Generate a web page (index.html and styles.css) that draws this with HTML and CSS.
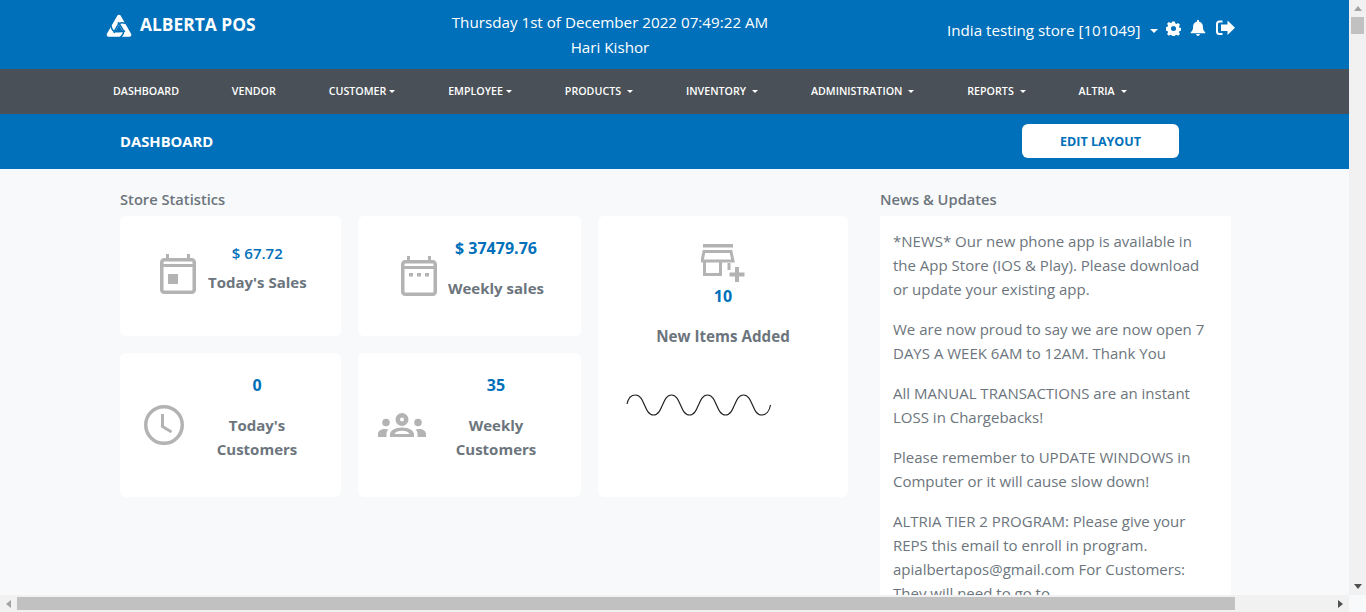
FILE: index.html
```html
<!DOCTYPE html>
<html lang="en">
<head>
<meta charset="utf-8">
<title>Alberta POS - Dashboard</title>
<link rel="stylesheet" href="styles.css">
</head>
<body>
  <div class="page">
    <header class="topbar">
      <div class="brand">
        <svg class="brand-logo" viewBox="0 0 26 26">
          <path d="M13 3.800L23.300 21.800H2.700z" fill="#fff" stroke="#fff" stroke-width="4" stroke-linejoin="round"/>
          <path d="M13 11.800L16.600 18.200H9.400z" fill="#0070ba"/>
          <path id="slit" d="M19.800 10.500C16.500 9.200 13.500 9.500 12 11.800C10 14.800 9 16.500 8 20" fill="none" stroke="#0070ba" stroke-width="1.500"/>
          <use href="#slit" transform="rotate(120 13 15.800)"/>
          <use href="#slit" transform="rotate(240 13 15.800)"/>
        </svg>
        <span class="brand-name">ALBERTA POS</span>
      </div>
      <div class="clock-block">
        <div>Thursday 1st of December 2022 07:49:22 AM</div>
        <div>Hari Kishor</div>
      </div>
      <div class="store-block">
        <span class="store-name">India testing store [101049]</span>
        <span class="caret caret-store"></span>
        <svg class="top-icon icon-gear" viewBox="0 0 16 16">
          <path fill-rule="evenodd" d="M6.600 0.500h2.800l.4 2 1.300.6 1.800-1.100 2 2-1.100 1.800.6 1.300 2 .4v2.800l-2 .4-.6 1.300 1.100 1.800-2 2-1.800-1.100-1.300.6-.4 2H6.600l-.4-2-1.300-.6-1.800 1.100-2-2 1.100-1.800-.6-1.300-2-.4V6.500l2-.4.6-1.300L1.100 3l2-2 1.800 1.100 1.300-.6zM8 5.300a2.700 2.700 0 1 0 0 5.400 2.700 2.700 0 0 0 0-5.400z" fill="#fff"/>
        </svg>
        <svg class="top-icon icon-bell" viewBox="0 0 16 17">
          <path d="M8 0c-.7 0-1.200.5-1.200 1.200v.6C4.300 2.300 2.800 4.300 2.800 6.800c0 3.700-1.100 4.900-2.400 6.100-.5.500-.2 1.300.5 1.300h14.200c.7 0 1-.8.5-1.300-1.300-1.200-2.400-2.400-2.400-6.100 0-2.500-1.500-4.500-4-5v-.6C9.200.5 8.700 0 8 0zM6 15c0 1.100.9 2 2 2s2-.9 2-2z" fill="#fff"/>
        </svg>
        <svg class="top-icon icon-exit" viewBox="0 0 19 16">
          <path d="M6.500 1.500H3.500C2 1.500 1 2.500 1 4v7.500C1 13 2 14 3.500 14h3" fill="none" stroke="#fff" stroke-width="2"/>
          <path d="M11.500 0.500L19 7.800l-7.500 7.300v-4H5V4.500h6.500z" fill="#fff"/>
        </svg>
      </div>
    </header>

    <nav class="mainnav">
      <a class="nav-link">DASHBOARD</a>
      <a class="nav-link">VENDOR</a>
      <a class="nav-link">CUSTOMER<span class="caret caret-tight"></span></a>
      <a class="nav-link">EMPLOYEE<span class="caret caret-tight"></span></a>
      <a class="nav-link">PRODUCTS<span class="caret"></span></a>
      <a class="nav-link">INVENTORY<span class="caret"></span></a>
      <a class="nav-link">ADMINISTRATION<span class="caret"></span></a>
      <a class="nav-link">REPORTS<span class="caret"></span></a>
      <a class="nav-link">ALTRIA<span class="caret"></span></a>
    </nav>

    <div class="titlebar">
      <h1 class="page-title">DASHBOARD</h1>
      <button class="edit-btn">EDIT LAYOUT</button>
    </div>

    <main class="content">
      <section class="stats">
        <h2 class="section-title">Store Statistics</h2>
        <div class="stat-grid">
          <div class="card stat stat-sales">
            <svg class="stat-icon" width="36" height="40" viewBox="0 0 36 40">
              <path d="M7.500 0v5M28.500 0v5" stroke="#b3b3b3" stroke-width="3"/>
              <rect x="1.750" y="5.750" width="32.500" height="32.500" rx="2.500" fill="none" stroke="#b3b3b3" stroke-width="3.500"/>
              <path d="M2 11.500h32" stroke="#b3b3b3" stroke-width="3"/>
              <rect x="8" y="20" width="10" height="10" fill="#b3b3b3"/>
            </svg>
            <div class="stat-text">
              <div class="stat-value value-light">$ 67.72</div>
              <div class="stat-label label-near">Today's Sales</div>
            </div>
          </div>

          <div class="card stat stat-weekly">
            <svg class="stat-icon" width="36" height="40" viewBox="0 0 36 40">
              <path d="M7.500 0v5M28.500 0v5" stroke="#b3b3b3" stroke-width="3"/>
              <rect x="1.750" y="5.750" width="32.500" height="32.500" rx="2.500" fill="none" stroke="#b3b3b3" stroke-width="3.500"/>
              <path d="M2 11.500h32" stroke="#b3b3b3" stroke-width="3"/>
              <path d="M8 17h4v3.500H8zM16 17h4v3.500h-4zM24 17h4v3.500h-4z" fill="#b3b3b3"/>
            </svg>
            <div class="stat-text">
              <div class="stat-value">$ 37479.76</div>
              <div class="stat-label">Weekly sales</div>
            </div>
          </div>

          <div class="card items">
            <svg class="items-icon" width="44" height="38" viewBox="0 0 44 38">
              <path d="M2 0h30v3.500H2z" fill="#b3b3b3"/>
              <path d="M3 7.500h27l2 9.500H1z" fill="none" stroke="#b3b3b3" stroke-width="3"/>
              <path d="M3.500 17v13.500h16V17M19.500 19v10" fill="none" stroke="#b3b3b3" stroke-width="3"/>
              <path d="M28 19v7" stroke="#b3b3b3" stroke-width="3"/>
              <path d="M36 23v15M28.500 30.500h15" stroke="#b3b3b3" stroke-width="4"/>
            </svg>
            <div class="stat-value">10</div>
            <div class="stat-label">New Items Added</div>
            <svg class="sparkline" width="146" height="22" viewBox="0 0 146 22">
              <path d="M1 10C2 5 5 1 9.500 1C19 1 18 21 27.500 21C37 21 36 1 45.500 1C55 1 54 21 63.500 21C73 21 72 1 81.500 1C91 1 90 21 99.500 21C109 21 108 1 117.500 1C127 1 126 21 135.500 21C140 21 143.500 17 144.500 11" fill="none" stroke="#222" stroke-width="1.200"/>
            </svg>
          </div>

          <div class="card stat stat-customers">
            <svg class="stat-icon" width="40" height="40" viewBox="0 0 40 40">
              <circle cx="20" cy="20" r="18.250" fill="none" stroke="#b3b3b3" stroke-width="3.500"/>
              <path d="M18.500 9v12.500l9 5.500" fill="none" stroke="#b3b3b3" stroke-width="3"/>
            </svg>
            <div class="stat-text">
              <div class="stat-value">0</div>
              <div class="stat-label">Today's Customers</div>
            </div>
          </div>

          <div class="card stat stat-people">
            <svg class="stat-icon" width="48" height="24" viewBox="0 0 48 24">
              <path fill-rule="evenodd" d="M24 0a6.500 6.500 0 1 1 0 13 6.500 6.500 0 0 1 0-13zm0 4.500a2 2 0 1 0 0 4 2 2 0 0 0 0-4z" fill="#b3b3b3"/>
              <circle cx="8" cy="9.500" r="3.800" fill="#b3b3b3"/>
              <circle cx="40" cy="9.500" r="3.800" fill="#b3b3b3"/>
              <path d="M0 24v-3c0-3 3-5 7-5 1.500 0 2.500.2 3.500.6C9 18 8.500 19.500 8.500 21v3zM48 24v-3c0-3-3-5-7-5-1.500 0-2.500.2-3.500.6 1.500 1.400 2 2.900 2 4.400v3z" fill="#b3b3b3"/>
              <path fill-rule="evenodd" d="M12 24v-2.500c0-4 5-7 12-7s12 3 12 7V24zm4.500-3h15c-1-2-3.900-3.200-7.500-3.200s-6.500 1.200-7.500 3.200z" fill="#b3b3b3"/>
            </svg>
            <div class="stat-text">
              <div class="stat-value">35</div>
              <div class="stat-label">Weekly Customers</div>
            </div>
          </div>
        </div>
      </section>

      <section class="news">
        <h2 class="section-title">News &amp; Updates</h2>
        <div class="card news-body">
          <p>*NEWS* Our new phone app is available in the App Store (IOS &amp; Play). Please download or update your existing app.</p>
          <p>We are now proud to say we are now open 7 DAYS A WEEK 6AM to 12AM. Thank You</p>
          <p>All MANUAL TRANSACTIONS are an instant LOSS in Chargebacks!</p>
          <p>Please remember to UPDATE WINDOWS in Computer or it will cause slow down!</p>
          <p>ALTRIA TIER 2 PROGRAM: Please give your REPS this email to enroll in program. apialbertapos@gmail.com For Customers: They will need to go to</p>
        </div>
      </section>
    </main>
  </div>

  <div class="scroll-v">
    <span class="arrow arrow-up"></span>
    <span class="thumb-v"></span>
    <span class="arrow arrow-down"></span>
  </div>
  <div class="scroll-h">
    <span class="arrow arrow-left"></span>
    <span class="thumb-h"></span>
    <span class="arrow arrow-right"></span>
  </div>
  <div class="scroll-corner"></div>
</body>
</html>
```

FILE: styles.css
```css
* {
  box-sizing: border-box;
}
html, body {
  height: 100%;
  margin: 0;
}
body {
  display: grid;
  grid-template-columns: 1349px 17px;
  grid-template-rows: 595px 17px;
  overflow: hidden;
  background: #f8f9fa;
  color: #6c757d;
  font-family: "Open Sans", "Noto Sans", sans-serif;
  font-size: 15px;
  line-height: 24px;
}
.page {
  overflow: hidden;
}

/* top blue bar */
.topbar {
  display: flex;
  height: 69px;
  background: #0070ba;
  color: #fff;
}
.brand {
  display: flex;
  align-items: flex-start;
  width: 451px;
  padding: 13px 0 0 106px;
}
.brand-logo {
  width: 26px;
  height: 26px;
  flex: none;
}
.brand-name {
  margin: -1px 0 0 8px;
  font-size: 17.400px;
  font-weight: 700;
  line-height: 24px;
}
.clock-block {
  width: 318px;
  padding-top: 10px;
  text-align: center;
  font-size: 15.200px;
  line-height: 25px;
  white-space: nowrap;
}
.store-block {
  display: flex;
  align-items: flex-start;
  padding: 18px 0 0 178px;
  font-size: 15.200px;
}
.store-name {
  white-space: nowrap;
}
.caret {
  display: inline-block;
  margin-left: 6px;
  border-top: 3.500px solid #fff;
  border-left: 3.500px solid transparent;
  border-right: 3.500px solid transparent;
  vertical-align: 2px;
}
.caret-tight {
  margin-left: 3px;
}
.caret-store {
  margin: 11px 0 0 9px;
  border-top-width: 4px;
  border-left-width: 4px;
  border-right-width: 4px;
}
.top-icon {
  flex: none;
  margin-top: 2px;
}
.icon-gear {
  width: 15px;
  height: 15px;
  margin-left: 8px;
  margin-top: 3px;
}
.icon-bell {
  width: 16px;
  height: 16px;
  margin-left: 9px;
}
.icon-exit {
  width: 19px;
  height: 16px;
  margin-left: 10px;
}

/* dark menu */
.mainnav {
  display: flex;
  align-items: center;
  gap: 52.800px;
  height: 45px;
  padding: 0 0 2px 113px;
  background: #495057;
  color: #fff;
  font-size: 10.700px;
  font-weight: 600;
}
.nav-link {
  white-space: nowrap;
}

/* page title */
.titlebar {
  display: flex;
  align-items: center;
  height: 55px;
  padding: 0 0 0 120px;
  background: #0070ba;
}
.page-title {
  width: 902px;
  margin: 0 0 2px;
  color: #fff;
  font-size: 14.800px;
  font-weight: 700;
}
.edit-btn {
  width: 157px;
  height: 34px;
  margin-bottom: 1px;
  padding: 0;
  border: 0;
  border-radius: 6px;
  background: #fff;
  color: #0070ba;
  font-family: inherit;
  font-size: 12.500px;
  font-weight: 700;
}

/* dashboard */
.content {
  display: flex;
  padding: 18px 0 0 120px;
}
.section-title {
  margin: 0 0 5px;
  font-size: 14.700px;
  font-weight: 600;
  line-height: 24px;
}
.stat-grid {
  display: grid;
  grid-template-columns: 221px 223px 250px;
  grid-template-rows: 120px 144px;
  gap: 17px;
}
.card {
  border-radius: 6px;
  background: #fff;
}
.stat {
  display: flex;
  align-items: flex-start;
}
.stat-text {
  text-align: center;
}
.stat-value {
  color: #0070ba;
  font-size: 16px;
  font-weight: 700;
}
.value-light {
  font-size: 15px;
  font-weight: 600;
}
.stat-label {
  margin-top: 16px;
  font-size: 15px;
  font-weight: 700;
}
.label-near {
  margin-top: 5px;
}
.stat-sales {
  padding: 25px 0 0 40px;
}
.stat-sales .stat-icon {
  margin: 13px 12px 0 0;
}
.stat-weekly {
  padding: 20px 0 0 43px;
}
.stat-weekly .stat-icon {
  margin: 20px 11px 0 0;
}
.stat-customers {
  padding: 20px 0 0 24px;
}
.stat-customers .stat-icon {
  margin: 32px 18px 0 0;
}
.stat-people {
  padding: 20px 0 0 20px;
}
.stat-people .stat-icon {
  margin: 40px 15px 0 0;
}
.stat-customers .stat-text,
.stat-people .stat-text {
  width: 110px;
}
.items {
  grid-row: 1 / span 2;
  grid-column: 3;
  display: flex;
  flex-direction: column;
  align-items: center;
  padding-top: 28px;
}
.items-icon {
  margin-bottom: 2px;
}
.items .stat-label {
  margin-top: 16px;
  font-size: 15.200px;
}
.sparkline {
  align-self: flex-start;
  margin: 46px 0 0 28px;
}
.news {
  width: 351px;
  margin-left: 32px;
}
.news-body {
  height: 400px;
  padding: 13px 16px 0 13px;
  border-radius: 0;
  font-size: 15px;
}
.news-body p {
  margin: 0 0 16px;
}

/* browser scrollbars, drawn because the shot shows them */
.scroll-v {
  display: flex;
  flex-direction: column;
  align-items: center;
  grid-row: 1 / span 2;
  grid-column: 2;
  height: 595px;
  background: #f1f1f1;
}
.thumb-v {
  width: 13px;
  height: 17px;
  margin-top: 6px;
  background: #c1c1c1;
}
.scroll-h {
  display: flex;
  align-items: center;
  background: #f1f1f1;
}
.thumb-h {
  width: 1218px;
  height: 13px;
  margin-left: 6px;
  background: #c1c1c1;
}
.scroll-corner {
  background: #dcdcdc;
}
.arrow {
  flex: none;
  width: 0;
  height: 0;
}
.arrow-up {
  margin-top: 6px;
  border-bottom: 5px solid #a3a3a3;
  border-left: 4px solid transparent;
  border-right: 4px solid transparent;
}
.arrow-down {
  margin-top: auto;
  margin-bottom: 6px;
  border-top: 5px solid #505050;
  border-left: 4px solid transparent;
  border-right: 4px solid transparent;
}
.arrow-left {
  margin-left: 6px;
  border-right: 5px solid #a3a3a3;
  border-top: 4px solid transparent;
  border-bottom: 4px solid transparent;
}
.arrow-right {
  margin-left: auto;
  margin-right: 6px;
  border-left: 5px solid #505050;
  border-top: 4px solid transparent;
  border-bottom: 4px solid transparent;
}
```
